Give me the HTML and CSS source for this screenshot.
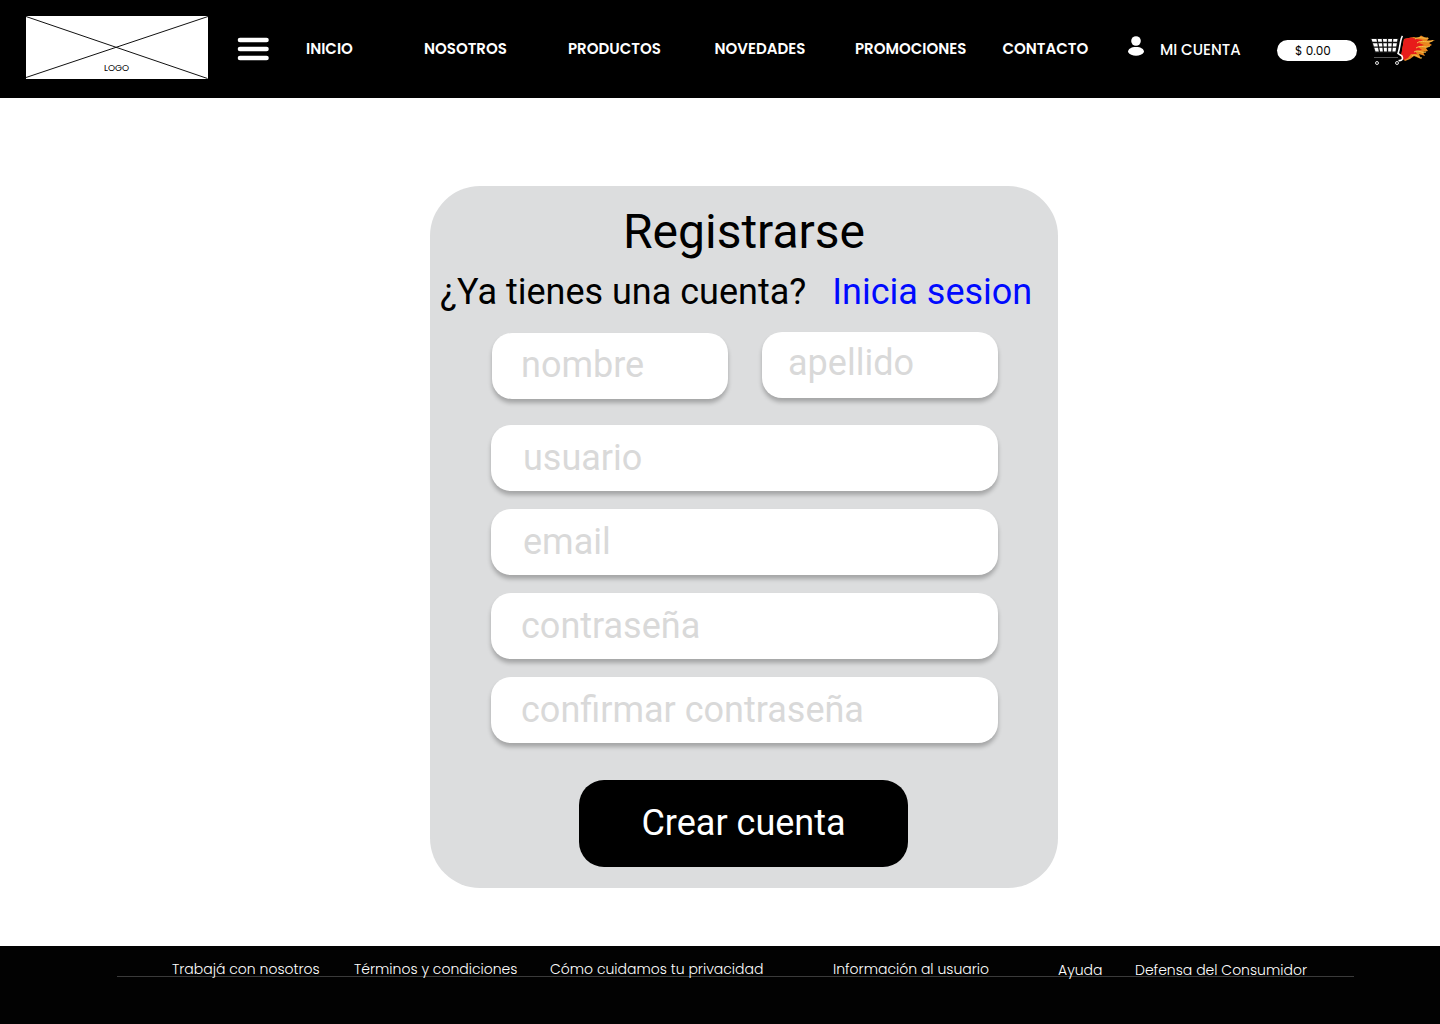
FILE: index.html
```html
<!DOCTYPE html>
<html lang="es">
<head>
<meta charset="utf-8">
<title>Registrarse</title>
<link rel="stylesheet" href="styles.css">
</head>
<body>
<header class="header">
  <a class="logo" href="#">
    <svg class="logo-cross" viewBox="0 0 182 63" aria-hidden="true"><path d="M0 .5 181.500 62.500M0 61.500 182 .5" fill="none" stroke="#111" stroke-width="1"/></svg>
    <span class="logo-text">LOGO</span>
  </a>
  <button class="menu" aria-label="Menú">
    <svg width="32" height="24" viewBox="0 0 32 24"><path d="M3 3H29.500M3 12H29.500M3 21H29.500" stroke="#fff" stroke-width="4.600" stroke-linecap="round"/></svg>
  </button>
  <nav class="nav">
    <a class="nav-link" href="#">INICIO</a>
    <a class="nav-link" href="#">NOSOTROS</a>
    <a class="nav-link" href="#">PRODUCTOS</a>
    <a class="nav-link" href="#">NOVEDADES</a>
    <a class="nav-link" href="#">PROMOCIONES</a>
    <a class="nav-link" href="#">CONTACTO</a>
  </nav>
  <a class="account" href="#">
    <svg class="user" width="18" height="22" viewBox="0 0 18 22"><circle cx="9" cy="6" r="4.800" fill="#fff"/><path d="M1 17C1 14 4 12 9 12s8 2 8 5c-1.500 2.500-4.500 3.800-8 3.800S2.500 19.500 1 17Z" fill="#fff"/></svg>
    <span class="account-text">MI CUENTA</span>
  </a>
  <span class="total">$ 0.00</span>
  <svg class="cart" width="66" height="34" viewBox="0 0 66 34">
    <path d="M34 5 39 4 44 3 48 4 51 1.500 55 3.500 59 4 57 6.500 65 6 59 9 62 11 56 14 58 17 53 18 55 22 49 20 51 25 44 22 40 25 35 27 31 23Z" fill="#e9861d"/>
    <path d="M34 5 41 3.500 47 5 53 6 49 9 54 11 48 13 52 16 45 17 47 20 41 20 38 24 34 26 31 22Z" fill="#e81c1a"/>
    <path d="M45 5C49 2 54 5 58 4M47 9C52 5 57 10 63 6.500M46 14C52 10 55 15 60 12M44 18C49 15 52 20 56 18M42 22C46 19 48 24 52 24" fill="none" stroke="#f3c04d" stroke-width="1"/>
    <path d="M0 4H29L26.500 19H5Z" fill="#111"/>
    <path d="M1.500 5H27.500L25.500 17.500H5.500Z" fill="#fff"/>
    <path d="M2 8.500H28M4 13.200H27M7 4.500 9.500 18M12.300 4.500 13.500 18M17.500 4.500V18M22.700 4.500 21.800 18" stroke="#111" stroke-width="1.300" fill="none"/>
    <path d="M32.500 2C30 5 30.500 13 28 19.500L32 22C33.500 25 32 27 28.500 26.500" fill="none" stroke="#fff" stroke-width="1.600"/>
    <path d="M4 23.500H28" stroke="#555" stroke-width="1"/>
    <circle cx="7" cy="29" r="1.500" fill="#111" stroke="#ddd"/><circle cx="27" cy="29" r="1.500" fill="#111" stroke="#ddd"/>
  </svg>
</header>
<main class="main">
  <form class="card">
    <h1 class="title">Registrarse</h1>
    <p class="subtitle"><span>¿Ya tienes una cuenta?</span><a class="login" href="#">Inicia sesion</a></p>
    <div class="names">
      <input class="field first-name" type="text" placeholder="nombre">
      <input class="field last-name" type="text" placeholder="apellido">
    </div>
    <div class="fields">
      <input class="field indented" type="text" placeholder="usuario">
      <input class="field indented" type="text" placeholder="email">
      <input class="field" type="password" placeholder="contraseña">
      <input class="field" type="password" placeholder="confirmar contraseña">
    </div>
    <button class="submit" type="button">Crear cuenta</button>
  </form>
</main>
<footer class="footer">
  <nav class="footer-nav">
    <a href="#">Trabajá con nosotros</a>
    <a href="#">Términos y condiciones</a>
    <a href="#">Cómo cuidamos tu privacidad</a>
    <a href="#">Información al usuario</a>
    <a class="lowered" href="#">Ayuda</a>
    <a class="lowered" href="#">Defensa del Consumidor</a>
  </nav>
</footer>
</body>
</html>
```
FILE: styles.css
```css
* { box-sizing: border-box; }
body {
  margin: 0;
  min-height: 1024px;
  display: flex;
  flex-direction: column;
  background: #fff;
  color: #000;
  font-family: Roboto, sans-serif;
}
a { color: inherit; text-decoration: none; }
button { border: 0; padding: 0; background: none; font: inherit; }

.header {
  height: 98px;
  display: flex;
  align-items: center;
  padding-left: 26px;
  background: #000;
  color: #fff;
  font-family: Poppins, Inter, sans-serif;
  white-space: nowrap;
}
.logo {
  position: relative;
  width: 182px;
  height: 63px;
  margin-bottom: 3px;
  display: flex;
  align-items: flex-end;
  background: #fff;
  color: #000;
}
.logo-cross { position: absolute; inset: 0; }
.logo-text { margin: 0 0 5px 78px; font-size: 9px; line-height: 12px; }
.menu { width: 32px; height: 24px; margin-left: 29px; }
.menu svg { display: block; }
.nav {
  width: 822px;
  margin-left: 37px;
  display: grid;
  grid-template-columns: 118px 144px 146.500px 140.500px 147.500px 1fr;
}
.nav-link { font-size: 15px; font-weight: 600; line-height: 20px; }
.account { width: 149px; display: flex; align-items: center; }
.user { margin: 0 15px 7px -1px; }
.account-text { font-size: 15px; font-weight: 500; line-height: 20px; padding-top: 2px; }
.total {
  width: 80px;
  height: 21px;
  margin-top: 3px;
  padding-left: 18px;
  border-radius: 11px;
  background: #fff;
  color: #000;
  font-size: 12px;
  line-height: 22px;
}
.cart { margin: 4px 0 0 13px; }

.main { flex: 1; padding: 88px 0 0 430px; }
.card {
  width: 628px;
  height: 702px;
  padding-top: 17px;
  border-radius: 50px;
  background: #dcddde;
}
.title { margin: 0; font-size: 48px; font-weight: 400; line-height: 58px; text-align: center; }
.subtitle {
  margin: 10px 0 0 10px;
  display: flex;
  gap: 26px;
  font-size: 36px;
  line-height: 42px;
  white-space: nowrap;
}
.login { color: #000aff; }
.names { display: flex; gap: 34px; margin: 19px 60px 0 62px; }
.names .field { width: 236px; }
.field {
  width: 100%;
  height: 66px;
  padding: 0 0 0 30px;
  border: 0;
  border-radius: 20px;
  background: #fff;
  box-shadow: 0 4px 4px rgba(0, 0, 0, .25);
  font: 36px Roboto, sans-serif;
}
.field::placeholder { color: #d9d9d9; opacity: 1; }
.first-name { margin-top: 1px; padding: 0 0 2px 29px; }
.last-name { padding: 0 0 4px 26px; }
.indented { padding-left: 32px; }
.fields { display: flex; flex-direction: column; gap: 18px; margin: 26px 60px 0 61px; }
.submit {
  display: block;
  width: 329px;
  height: 86.500px;
  margin: 37px 0 0 149px;
  border-radius: 25px;
  background: #000;
  color: #fff;
  font-size: 36px;
}

.footer { height: 78px; padding: 0 86px 0 117px; background: #020202; }
.footer-nav {
  height: 78px;
  padding: 13px 0 0 55px;
  display: grid;
  grid-template-columns: 182px 196px 283px 225px 77px 1fr;
  align-items: start;
  background: linear-gradient(#3a3a3a, #3a3a3a) 0 30px / 100% 1px no-repeat;
  color: #fff;
  font: 300 14px/20px Poppins, Inter, sans-serif;
  white-space: nowrap;
}
.lowered { margin-top: 1px; }
```
